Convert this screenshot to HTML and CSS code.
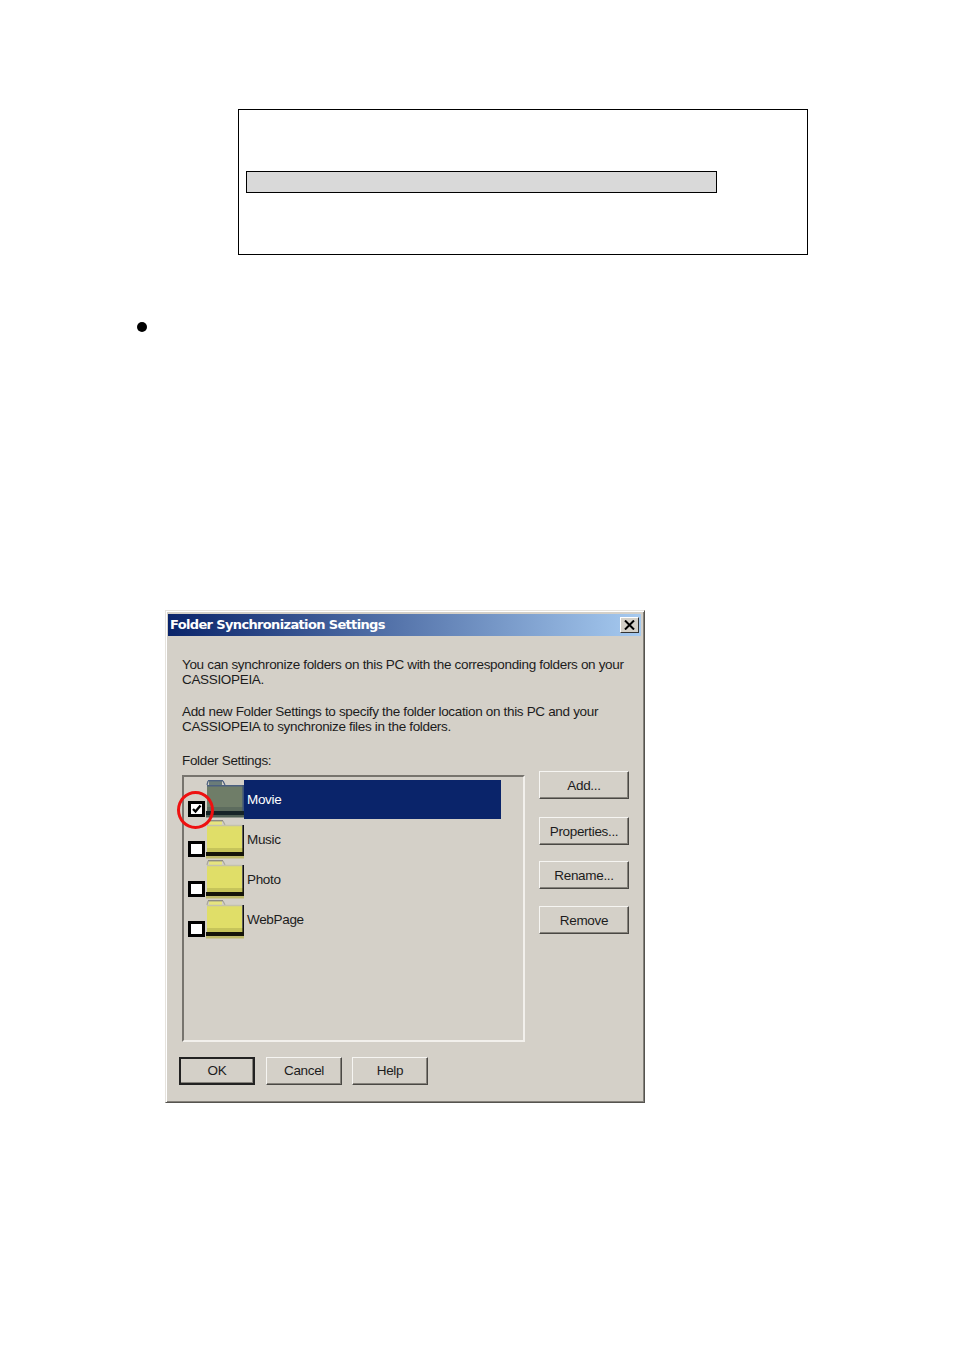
FILE: index.html
```html
<!DOCTYPE html>
<html lang="en">
<head>
<meta charset="utf-8">
<title>Folder Synchronization Settings</title>
<link rel="stylesheet" href="styles.css">
</head>
<body>
<main class="page">
  <section class="note-box"><div class="note-bar"></div></section>
  <div class="bullet"></div>
  <section class="dialog">
    <header class="titlebar">
      <h1 class="title">Folder Synchronization Settings</h1>
      <span class="close"><svg viewBox="0 0 11 10" width="11" height="10"><path d="M1 0.5L10 9.5M10 0.5L1 9.5" stroke="#000" stroke-width="2" fill="none"/></svg></span>
    </header>
    <div class="content">
      <p class="para">You can synchronize folders on this PC with the corresponding folders on your<br>CASSIOPEIA.</p>
      <p class="para">Add new Folder Settings to specify the folder location on this PC and your<br>CASSIOPEIA to synchronize files in the folders.</p>
      <p class="label">Folder Settings:</p>
      <div class="main-row">
        <div class="list">
          <div class="row">
            <span class="check"><svg viewBox="0 0 11 10" width="11" height="10"><path d="M2 5L4.500 7.500L9.500 1.500" stroke="#000" stroke-width="2.400" fill="none"/></svg></span>
            <svg class="folder" viewBox="0 0 38 40" width="38" height="40"><use href="#gray-folder"/></svg>
            <span class="name name-selected">Movie</span>
          </div>
          <div class="row">
            <span class="check"></span>
            <svg class="folder" viewBox="0 0 38 40" width="38" height="40"><use href="#yellow-folder"/></svg>
            <span class="name">Music</span>
          </div>
          <div class="row">
            <span class="check"></span>
            <svg class="folder" viewBox="0 0 38 40" width="38" height="40"><use href="#yellow-folder"/></svg>
            <span class="name">Photo</span>
          </div>
          <div class="row">
            <span class="check"></span>
            <svg class="folder" viewBox="0 0 38 40" width="38" height="40"><use href="#yellow-folder"/></svg>
            <span class="name">WebPage</span>
          </div>
          <div class="ring"></div>
        </div>
        <div class="side-buttons">
          <button class="btn btn-side">Add...</button>
          <button class="btn btn-side btn-props">Properties...</button>
          <button class="btn btn-side">Rename...</button>
          <button class="btn btn-side">Remove</button>
        </div>
      </div>
      <div class="footer-buttons">
        <button class="btn btn-foot btn-default">OK</button>
        <button class="btn btn-foot">Cancel</button>
        <button class="btn btn-foot btn-help">Help</button>
      </div>
    </div>
  </section>
</main>
<svg class="defs" width="0" height="0" aria-hidden="true">
  <symbol id="yellow-folder" viewBox="0 0 38 40">
    <path d="M3 1H16V6H3Z" fill="#e6e47e"/>
    <path d="M2 0.700H17" stroke="#8d8b84" stroke-width="1.400"/>
    <path d="M2 1L1 5M17 1L19 5" stroke="#a9a79c" stroke-width="1.200"/>
    <path d="M1 6H36V28H1Z" fill="#e0de68"/>
    <path d="M1 28H37V32H1Z" fill="#c6c45a"/>
    <path d="M1 5.500H36" stroke="#c4c2ac" stroke-width="1.600"/>
    <path d="M37.200 5V33" stroke="#111" stroke-width="1.600"/>
    <path d="M0 32H38V36H0Z" fill="#14140a"/>
    <path d="M0 36H38V38.500H0Z" fill="#bdb96a"/>
  </symbol>
  <symbol id="gray-folder" viewBox="0 0 38 40">
    <path d="M3 1H16V6H3Z" fill="#6a7c78"/>
    <path d="M2 0.700H17" stroke="#4c6080" stroke-width="1.400"/>
    <path d="M2 1L1 5M17 1L19 5" stroke="#4c6080" stroke-width="1.200"/>
    <path d="M1 6H37V28H1Z" fill="#6f7d68"/>
    <path d="M1 27H37V31H1Z" fill="#5d6c5e"/>
    <path d="M1 5.800H37" stroke="#4c6080" stroke-width="1.600"/>
    <path d="M37.200 5V31" stroke="#3e5478" stroke-width="1.600"/>
    <path d="M0 31H38V35H0Z" fill="#162428"/>
    <path d="M0 35H38V37.500H0Z" fill="#4f5f55"/>
  </symbol>
</svg>
</body>
</html>
```
FILE: styles.css
```css
html, body { margin: 0; padding: 0; background: #fff; }
.page { width: 954px; height: 1351px; padding-top: 109px; box-sizing: border-box; overflow: hidden; }
.defs { position: absolute; }

.note-box { width: 570px; height: 146px; margin-left: 238px; border: 1px solid #000; box-sizing: border-box; padding: 61px 0 0 7px; }
.note-bar { width: 471px; height: 22px; box-sizing: border-box; border: 1px solid #000; background: #d9d9d9; }

.bullet { width: 10px; height: 10px; border-radius: 50%; background: #000; margin: 67px 0 0 137px; }

.dialog { width: 480px; height: 493px; margin: 278px 0 0 165px; box-sizing: border-box; background: #d4d0c8; padding: 3px 3px 3px 2px;
  border: 1px solid; border-color: #e6e3de #55534f #55534f #e6e3de;
  font-family: "Liberation Sans", sans-serif; font-size: 13.500px; color: #1c1c1c; box-shadow: inset 1px 1px 0 #fff, inset -1px -1px 0 #85827b; }

.titlebar { height: 22px; display: flex; align-items: center; justify-content: space-between; padding: 0 2px 0 2px; background: linear-gradient(90deg, #0a246a, #a6caf0); }
.title { margin: 0; font: bold 13px/22px "DejaVu Sans", sans-serif; color: #fff; letter-spacing: -0.65px; }
.close { width: 19px; height: 16px; box-sizing: border-box; display: flex; align-items: center; justify-content: center; background: #d4d0c8; border: 1px solid; border-color: #fff #333 #333 #fff; }

.content { padding: 0 12px 0 14px; }
.para { margin: 0 0 17px; line-height: 15px; letter-spacing: -0.33px; white-space: nowrap; }
.para:first-child { margin-top: 21px; }
.label { margin: 19px 0 7px; line-height: 15px; letter-spacing: -0.33px; }

.main-row { display: flex; align-items: flex-start; position: relative; }
.list { position: relative; width: 343px; height: 267px; box-sizing: border-box; padding: 3px 0 0 4px; border: 2px solid; border-color: #77746e #f2f0ec #f2f0ec #77746e; }
.row { display: flex; align-items: flex-end; height: 40px; width: 313px; }
.check { width: 17px; height: 16px; box-sizing: border-box; border: 3px solid #000; background: #fff; display: flex; align-items: center; justify-content: center; margin-bottom: 3px; flex: none; }
.folder { flex: none; margin-left: 1px; }
.name { flex: 1; align-self: stretch; margin-bottom: 1px; display: flex; align-items: center; padding-left: 3px; letter-spacing: -0.33px; }
.name-selected { background: #0a246a; color: #fff; }
.ring { position: absolute; left: -7px; top: 14px; width: 37px; height: 38px; box-sizing: border-box; border: 3px solid #ee1111; border-radius: 50%; }

.side-buttons { display: flex; flex-direction: column; gap: 17px; margin: -4px 0 0 14px; }
.btn { padding: 0; font: 13.500px "Liberation Sans", sans-serif; color: #1c1c1c; letter-spacing: -0.33px; background: #d4d0c8; border: 1px solid; border-color: #f6f5f2 #4a4844 #4a4844 #f6f5f2; box-shadow: inset -1px -1px 0 #85827b; }
.btn-side { width: 90px; height: 28px; }
.btn-props { margin: 1px 0 -1px; }

.footer-buttons { display: flex; gap: 11px; margin: 15px 0 0 -3px; }
.btn-foot { width: 76px; height: 28px; padding-bottom: 2px; }
.btn-help { margin-left: -1px; }
.btn-default { border: 2px solid #222; }
```
